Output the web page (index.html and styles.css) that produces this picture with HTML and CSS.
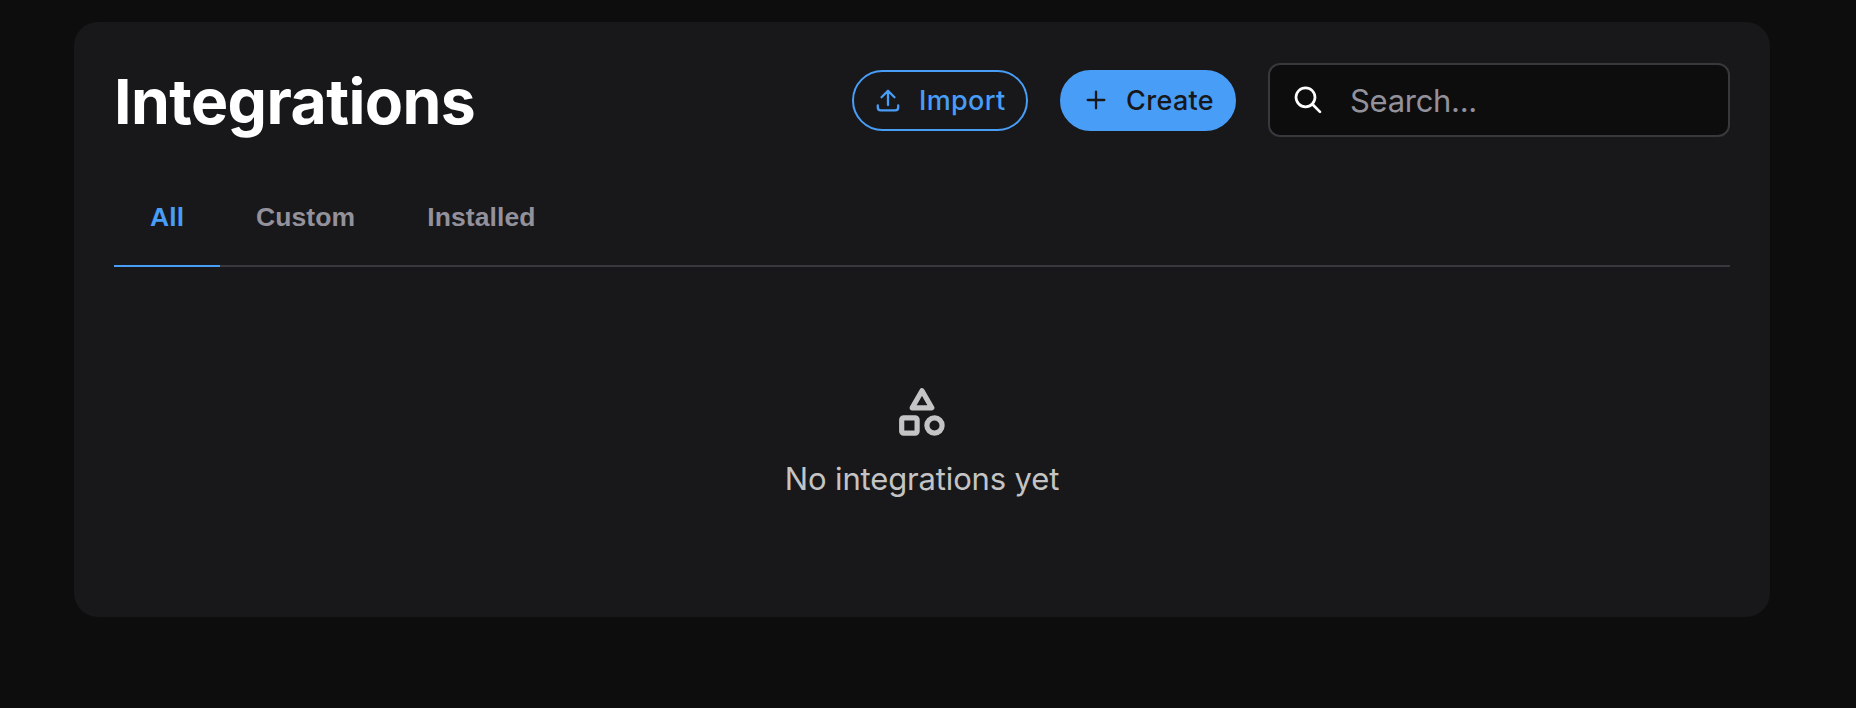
FILE: index.html
```html
<!DOCTYPE html>
<html lang="en">
<head>
<meta charset="utf-8">
<title>Integrations</title>
<link rel="stylesheet" href="styles.css">
</head>
<body>
<main class="card">
  <header class="header">
    <h1 class="title">Integrations</h1>
    <button class="btn btn-outline" type="button">
      <svg class="btn-icon" viewBox="0 0 24 24"><path d="M12 17V3.2M5.5 9.2L12 2.7L18.5 9.2M1.8 17.4V19.5Q1.8 22.4 4.7 22.4H19.3Q22.2 22.4 22.2 19.5V17.4"/></svg>
      <span class="import-label">Import</span>
    </button>
    <button class="btn btn-solid" type="button">
      <svg class="btn-icon" viewBox="0 0 24 24"><path d="M12 3.7V20.3M3.7 12H20.3"/></svg>
      <span class="create-label">Create</span>
    </button>
    <div class="search">
      <svg class="search-icon" viewBox="0 0 28 28"><circle cx="11.5" cy="11.3" r="9.5"/><path d="M18.4 18.2L26 25.9"/></svg>
      <span class="search-text">Search...</span>
    </div>
  </header>
  <nav class="tabs">
    <a class="tab tab-active">All</a>
    <a class="tab">Custom</a>
    <a class="tab">Installed</a>
  </nav>
  <section class="empty">
    <svg class="empty-icon" viewBox="0 0 46 48"><path d="M23 2.8L32.8 19.8H13.2Z"/><rect x="2.7" y="29.8" width="15.4" height="15.4" rx="2"/><circle cx="35.5" cy="37.5" r="7.6"/></svg>
    <p class="empty-text">No integrations yet</p>
  </section>
</main>
</body>
</html>
```
FILE: styles.css
```css
* { box-sizing: border-box; }
body {
  margin: 0;
  height: 708px;
  padding: 22px 86px 0 74px;
  overflow: hidden;
  background: #0d0d0d;
  font-family: Inter, "Liberation Sans", sans-serif;
}
.card {
  height: 595px;
  padding: 41px 40px 0;
  border-radius: 24px;
  background: #18181a;
}
.header { display: flex; align-items: center; height: 74px; }
.title {
  margin: 0 auto 0 0;
  padding-top: 2px;
  color: #fff;
  font-size: 62.5px;
  line-height: 74px;
  font-weight: 700;
  letter-spacing: -0.6px;
}
.btn {
  display: flex;
  align-items: center;
  gap: 18px;
  width: 176px;
  height: 61px;
  margin-right: 32px;
  padding: 0 0 0 22px;
  border: 2px solid #489df7;
  border-radius: 31px;
  font: 500 27px/32px Inter, "Liberation Sans", sans-serif;
  white-space: nowrap;
}
.btn-outline { background: none; color: #489df7; }
.btn-solid { background: #489df7; color: #18181a; }
.import-label, .create-label { padding-top: 2px; letter-spacing: 0.35px; }
.import-label { padding-left: 1px; }
.btn-icon {
  flex: none;
  width: 24px;
  height: 24px;
  fill: none;
  stroke: currentColor;
  stroke-width: 2.3;
  stroke-linecap: round;
  stroke-linejoin: round;
}
.search {
  display: flex;
  align-items: center;
  gap: 28px;
  width: 462px;
  height: 74px;
  padding-left: 24px;
  border: 2px solid #38383d;
  border-radius: 12px;
  background: #0d0d0d;
}
.search-icon {
  width: 28px;
  height: 28px;
  fill: none;
  stroke: #fff;
  stroke-width: 2.7;
  stroke-linecap: round;
}
.search-text {
  padding-top: 2px;
  color: #93919b;
  font-size: 31px;
  line-height: 40px;
  letter-spacing: -0.3px;
}
.tabs { display: flex; height: 130px; padding-top: 32px; border-bottom: 2px solid #38383d; }
.tab {
  height: 98px;
  padding: 33px 36px 0;
  color: #93919b;
  font: 700 26.5px/30px "Liberation Sans", sans-serif;
  letter-spacing: 0.1px;
}
.tab-active { color: #489df7; border-bottom: 2px solid #489df7; width: 106px; }
.empty { display: flex; flex-direction: column; align-items: center; padding-top: 121px; }
.empty-icon {
  width: 46px;
  height: 48px;
  fill: none;
  stroke: #c4c4c4;
  stroke-width: 5.2;
  stroke-linejoin: round;
}
.empty-text { margin: 23px 0 0; color: #c4c4c4; font-size: 31px; line-height: 40px; letter-spacing: -0.15px; }
```
